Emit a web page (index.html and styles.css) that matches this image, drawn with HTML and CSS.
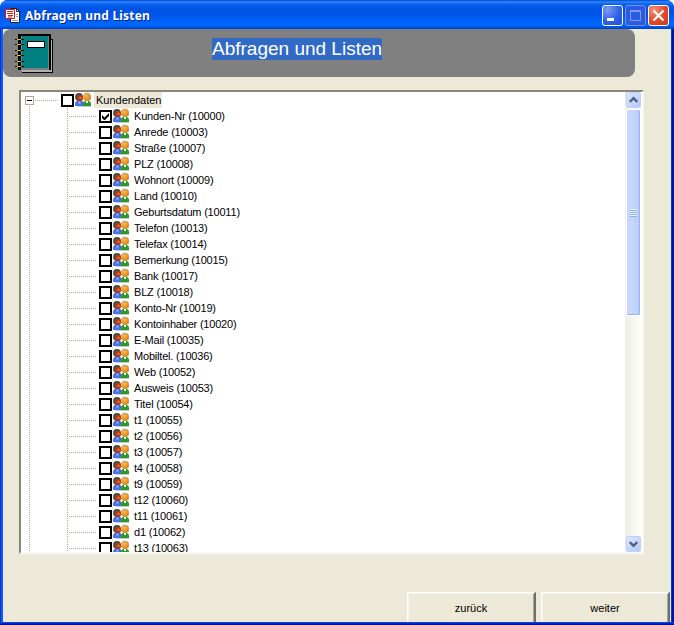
FILE: index.html
```html
<!DOCTYPE html>
<html lang="de">
<head>
<meta charset="utf-8">
<title>Abfragen und Listen</title>
<link rel="stylesheet" href="styles.css">
</head>
<body>
<svg width="0" height="0" class="defs">
  <defs>
    <linearGradient id="blueBody" x1="0" y1="0" x2="0" y2="1"><stop offset="0" stop-color="#3c62e0"/><stop offset="1" stop-color="#4b7cf4"/></linearGradient>
    <radialGradient id="tan" cx=".4" cy=".35" r=".7"><stop offset="0" stop-color="#ffb850"/><stop offset="1" stop-color="#d67a18"/></radialGradient>
    <symbol id="users" viewBox="0 0 16 16">
      <path d="M2 14h14v1H2z" fill="#c8c8c8"/>
      <path d="M14 3h2v5h-2z" fill="#ccc"/>
      <path d="M0 14v-2q0-2.500 2-3h5q2 .5 2 3v2z" fill="url(#blueBody)"/>
      <path d="M3.500 9.500h2v2h-2z" fill="#a9c5ff"/>
      <circle cx="4" cy="5" r="3.900" fill="#48484e"/>
      <circle cx="4.800" cy="6" r="3.200" fill="#a04418"/>
      <path d="M4 5h3v1.500H4z" fill="#ea7030"/>
      <path d="M8 14v-2q0-2.500 2-3h4q2 .5 2 3v2z" fill="#289828"/>
      <path d="M11 9h2v2h-2z" fill="#e8ffe0"/>
      <circle cx="12" cy="5" r="3.900" fill="url(#tan)"/>
      <path d="M8.500 3q.8-2.600 3.500-2.600T15.500 3q-1.500-1-3.500-1T8.500 3z" fill="#c8a868"/>
    </symbol>
  </defs>
</svg>
<div class="window">
  <header class="titlebar">
    <svg class="app-icon" width="16" height="16" viewBox="0 0 16 16">
      <path d="M5.500 .5h6l3 3v11h-9z" fill="#fff" stroke="#222"/>
      <path d="M11.500 .5v3h3" fill="none" stroke="#222"/>
      <path d="M11 6.500h2M11 8.500h2M7 12.500h6" stroke="#999"/>
      <path d="M.5 1.500h9v9h-9z" fill="#fff" stroke="#d81810"/>
      <path d="M2 3.500h6M2 5.500h6M3 7.500h5M3 9h4" stroke="#e02018" stroke-width="1.200"/>
    </svg>
    <h1>Abfragen und Listen</h1>
    <div class="controls">
      <svg class="ctl min" viewBox="0 0 19 19"><path d="M4 12h7v3H4z" fill="#fff"/></svg>
      <svg class="ctl max" viewBox="0 0 19 19"><path d="M4.500 4.500h10v10h-10zM4 5.500h11" fill="none" stroke="#7f9ae8"/></svg>
      <svg class="ctl close" viewBox="0 0 19 19"><path d="M4.500 4.500l10 10M14.500 4.500l-10 10" stroke="#fff" stroke-width="2.200"/></svg>
    </div>
  </header>
  <main class="client">
    <div class="banner">
      <svg class="book" width="39" height="40" viewBox="0 0 39 40" shape-rendering="crispEdges">
        <path d="M7 5h31v34H7z" fill="#000"/>
        <path d="M7 6h30v32H7z" fill="#b0b0b0"/>
        <path d="M3 0h33v36H3z" fill="#000"/>
        <path d="M6 2h28v34H6z" fill="#808080"/>
        <path d="M7 2h26v32H7z" fill="#008080"/>
        <path d="M12 7h18v7H12z" fill="#000"/><path d="M13 8h16v5H13z" fill="#fff"/>
        <path d="M0 5.500h9M0 10.500h9M0 16.500h9M0 21.500h9M0 27.500h9M0 32.500h9" stroke="#000"/>
        <path d="M2 5.500h4M2 10.500h4M2 16.500h4M2 21.500h4M2 27.500h4M2 32.500h4" stroke="#d8d000"/>
      </svg>
      <span class="banner-text">Abfragen und Listen</span>
    </div>
    <section class="tree">
      <div class="tree-body">
        <div class="root"><span class="expander"></span><i class="stub"></i><span class="box"></span><svg class="users"><use href="#users"/></svg><span class="root-label">Kundendaten</span></div>
        <ul class="nodes">
          <li><i></i><span class="box"><svg viewBox="0 0 9 9"><path d="M1 3v3l2 2h1l4-4V1L3.500 5.500z"/></svg></span><svg class="users"><use href="#users"/></svg><span>Kunden-Nr (10000)</span></li>
          <li><i></i><span class="box"></span><svg class="users"><use href="#users"/></svg><span>Anrede (10003)</span></li>
          <li><i></i><span class="box"></span><svg class="users"><use href="#users"/></svg><span>Straße (10007)</span></li>
          <li><i></i><span class="box"></span><svg class="users"><use href="#users"/></svg><span>PLZ (10008)</span></li>
          <li><i></i><span class="box"></span><svg class="users"><use href="#users"/></svg><span>Wohnort (10009)</span></li>
          <li><i></i><span class="box"></span><svg class="users"><use href="#users"/></svg><span>Land (10010)</span></li>
          <li><i></i><span class="box"></span><svg class="users"><use href="#users"/></svg><span>Geburtsdatum (10011)</span></li>
          <li><i></i><span class="box"></span><svg class="users"><use href="#users"/></svg><span>Telefon (10013)</span></li>
          <li><i></i><span class="box"></span><svg class="users"><use href="#users"/></svg><span>Telefax (10014)</span></li>
          <li><i></i><span class="box"></span><svg class="users"><use href="#users"/></svg><span>Bemerkung (10015)</span></li>
          <li><i></i><span class="box"></span><svg class="users"><use href="#users"/></svg><span>Bank (10017)</span></li>
          <li><i></i><span class="box"></span><svg class="users"><use href="#users"/></svg><span>BLZ (10018)</span></li>
          <li><i></i><span class="box"></span><svg class="users"><use href="#users"/></svg><span>Konto-Nr (10019)</span></li>
          <li><i></i><span class="box"></span><svg class="users"><use href="#users"/></svg><span>Kontoinhaber (10020)</span></li>
          <li><i></i><span class="box"></span><svg class="users"><use href="#users"/></svg><span>E-Mail (10035)</span></li>
          <li><i></i><span class="box"></span><svg class="users"><use href="#users"/></svg><span>Mobiltel. (10036)</span></li>
          <li><i></i><span class="box"></span><svg class="users"><use href="#users"/></svg><span>Web (10052)</span></li>
          <li><i></i><span class="box"></span><svg class="users"><use href="#users"/></svg><span>Ausweis (10053)</span></li>
          <li><i></i><span class="box"></span><svg class="users"><use href="#users"/></svg><span>Titel (10054)</span></li>
          <li><i></i><span class="box"></span><svg class="users"><use href="#users"/></svg><span>t1 (10055)</span></li>
          <li><i></i><span class="box"></span><svg class="users"><use href="#users"/></svg><span>t2 (10056)</span></li>
          <li><i></i><span class="box"></span><svg class="users"><use href="#users"/></svg><span>t3 (10057)</span></li>
          <li><i></i><span class="box"></span><svg class="users"><use href="#users"/></svg><span>t4 (10058)</span></li>
          <li><i></i><span class="box"></span><svg class="users"><use href="#users"/></svg><span>t9 (10059)</span></li>
          <li><i></i><span class="box"></span><svg class="users"><use href="#users"/></svg><span>t12 (10060)</span></li>
          <li><i></i><span class="box"></span><svg class="users"><use href="#users"/></svg><span>t11 (10061)</span></li>
          <li><i></i><span class="box"></span><svg class="users"><use href="#users"/></svg><span>d1 (10062)</span></li>
          <li><i></i><span class="box"></span><svg class="users"><use href="#users"/></svg><span>t13 (10063)</span></li>
        </ul>
      </div>
      <div class="scrollbar">
        <svg class="arrow" viewBox="0 0 14 14"><path d="M3 9l4-4 4 4" /></svg>
        <div class="thumb"><span class="grip"></span></div>
        <svg class="arrow down" viewBox="0 0 14 14"><path d="M3 5l4 4 4-4"/></svg>
      </div>
    </section>
    <footer class="actions"><button>zurück</button><button>weiter</button></footer>
  </main>
</div>
</body>
</html>
```
FILE: styles.css
```css
* { box-sizing: border-box; }
body { margin: 0; background: #fff; font-family: "Liberation Sans", Arial, sans-serif; font-size: 11px; color: #000; overflow: hidden; }
.defs { display: block; height: 0; }
.window {
  width: 674px; height: 625px; padding: 0 3px 3px;
  display: flex; flex-direction: column;
  border-radius: 8px 8px 0 0; overflow: hidden;
  background: linear-gradient(#0050e8, #0040dc) 0 0 / 100% 29px no-repeat,
    linear-gradient(#0048f0 0 1px, #0020b0 1px 2px, #00108c 2px) 0 100% / 100% 3px no-repeat,
    linear-gradient(90deg, #0030d8 0 1px, #0a5cf4 1px 3px, transparent 3px 671px, #0038e0 671px 672px, #0014a0 672px);
}
.titlebar {
  height: 29px; flex: none; margin: 0 -3px; padding: 5px 5px 0 6px;
  display: flex; align-items: flex-start;
  background: linear-gradient(#0048d0 0, #2f86ff 2px, #0a62f0 4px, #0054e3 8px, #0055e8 15px, #0062fb 21px, #0068ff 25px, #0058e8 27px, #0040c0 29px);
}
.app-icon { margin: 3px 0 0 -1px; }
h1 {
  margin: 2px 0 0 4px; font: bold 12px/18px "Noto Sans", "Open Sans", sans-serif;
  color: #fff; text-shadow: 1px 1px 0 #0a2a90; letter-spacing: .2px; white-space: nowrap;
}
.controls { display: flex; gap: 2px; margin-left: auto; }
.ctl { width: 21px; height: 21px; border: 1px solid #fff; border-radius: 3px; background: radial-gradient(circle at 25% 20%, #7c9df4, #2e61e4 55%, #1f50d4); }
.ctl.max { border-color: #6f91ea; background: #2a5be0; }
.ctl.close { background: radial-gradient(circle at 25% 20%, #f09078, #e2492a 55%, #c83a18); }
.client { flex: 1; min-height: 0; background: #ece9d8; display: flex; flex-direction: column; }
.banner { width: 632px; height: 48px; flex: none; border-radius: 8px; background: #808080; display: flex; align-items: flex-start; }
.book { margin: 5px 0 0 12px; }
.banner-text { margin: 9px 0 0 158px; background: #316ac5; color: #fff; font-size: 19px; line-height: 22px; white-space: nowrap; }
.tree {
  width: 625px; height: 464px; flex: none; margin: 13px 0 0 16px; display: flex; background: #fff;
  border: 2px solid; border-color: #8b887a #f9f8f2 #f9f8f2 #8b887a;
}
.tree-body {
  flex: 1; overflow: hidden;
  background: repeating-linear-gradient(#aca899 0 1px, transparent 1px 2px) 8px 14px / 1px 100% no-repeat;
}
.root { height: 16px; display: flex; align-items: center; padding-left: 4px; }
.expander { width: 9px; height: 9px; border: 1px solid #aca899; background: linear-gradient(#000, #000) center / 5px 1px no-repeat #fff; }
.stub, .nodes i { height: 1px; background: repeating-linear-gradient(90deg, #aca899 0 1px, transparent 1px 2px); }
.stub { width: 24px; margin: 0 2px 0 1px; }
.box { width: 13px; height: 13px; flex: none; border: 2px solid #000; margin-top: 1px; background: #fff; }
.box svg { display: block; width: 9px; height: 9px; }
.users { width: 16px; height: 16px; flex: none; margin-left: 1px; }
.root-label { margin-left: 3px; padding: 0 2px; background: #ece9d8; line-height: 16px; width: 68px; white-space: nowrap; }
.nodes {
  list-style: none; margin: 0 0 0 46px; padding: 0;
  background: repeating-linear-gradient(#aca899 0 1px, transparent 1px 2px) 0 0 / 1px 100% no-repeat;
}
.nodes li { height: 16px; display: flex; align-items: center; white-space: nowrap; line-height: 16px; }
.nodes i { width: 30px; margin-right: 2px; }
.nodes li > span:last-child { margin-left: 5px; letter-spacing: -.2px; }
.scrollbar { width: 17px; padding: 0 1px; background: linear-gradient(90deg, #eeede5, #fefefb); display: flex; flex-direction: column; }
.arrow { width: 15px; height: 16px; flex: none; border: 1px solid #fff; border-radius: 2px; background: linear-gradient(135deg, #dce6ff, #b4c8f8); outline: 1px solid #c0d0f4; outline-offset: -1px; }
.arrow path { fill: none; stroke: #4d6185; stroke-width: 2.500; }
.thumb {
  height: 207px; flex: none; margin-top: 1px; border: 1px solid #fff; border-radius: 2px;
  background: linear-gradient(90deg, #c8d6fb, #c4d5fd 50%, #b4ccfa); box-shadow: inset -1px -1px #98b4ec;
  display: grid; place-items: center;
}
.grip { width: 7px; height: 8px; background: repeating-linear-gradient(#eef4fe 0 1px, #8cb0f8 1px 2px); }
.arrow.down { margin-top: auto; }
.actions { margin: auto 1px 0 auto; display: flex; gap: 5px; }
.actions button {
  width: 129px; height: 30px; padding: 0; font: 11px "Liberation Sans", Arial, sans-serif; color: #000; background: #ece9d8;
  border: solid; border-width: 1px 2px 0 1px; border-color: #fff #716f64 #fff #fff; border-radius: 0;
  box-shadow: inset 1px 1px #f5f3ea, inset -1px 0 #aca899;
}
```
